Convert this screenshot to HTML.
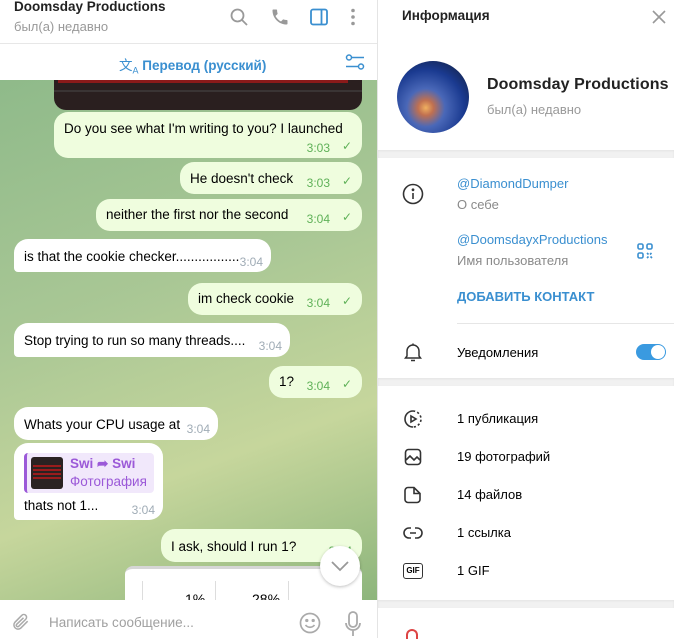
<!DOCTYPE html>
<html><head><meta charset="utf-8"><style>
*{margin:0;padding:0;box-sizing:border-box}
body{width:674px;height:638px;overflow:hidden;font-family:"Liberation Sans",sans-serif;font-size:13.5px;color:#000;position:relative;background:#fff}
.a{position:absolute;white-space:nowrap}
.bg{left:0;top:80px;width:377px;height:520px;background:linear-gradient(160deg,#8fba8a 0%,#a9c795 40%,#c6d69c 70%,#8db57c 100%)}
.b{position:absolute;border-radius:14px;padding:0 10px;white-space:nowrap}
.o{background:#effdde}
.i{background:#fff}
.t{position:absolute;font-size:12px}
.o .t{color:#5fb158}
.i .t{color:#a0acb6}
.ico{position:absolute}
.row{position:absolute;left:457px;font-size:13px;white-space:nowrap}
.gray{color:#8a8a8a}
.blue{color:#3a8fd0}
.band{position:absolute;left:378px;width:296px;height:8px;background:#f1f1f1;box-shadow:inset 0 1px 2px rgba(0,0,0,.06)}
</style></head><body>
<div class="a bg"></div>
<div class="b" style="left:54px;top:72px;width:308px;height:38px;background:#2a1f1f;border-radius:0 0 12px 12px"><div style="position:absolute;left:4px;top:8px;width:290px;height:3px;background:#8a1a1a"></div><div style="position:absolute;left:0;top:18px;width:308px;height:2px;background:#3a3434"></div></div>
<!-- header -->
<div class="a" style="left:0;top:0;width:377px;height:44px;background:#fff;border-bottom:1px solid #e7e7e7"></div>
<div class="a" style="left:14px;top:-1px;font-weight:bold;font-size:13.5px;color:#222">Doomsday Productions</div>
<div class="a" style="left:14px;top:19px;color:#999;font-size:13px">был(а) недавно</div>
<svg class="ico" style="left:229px;top:7px" width="20" height="20" viewBox="0 0 20 20" fill="none" stroke="#999" stroke-width="1.8"><circle cx="8.5" cy="8.5" r="6"/><path d="M13 13l5 5"/></svg>
<svg class="ico" style="left:270px;top:7px" width="20" height="20" viewBox="0 0 24 24" fill="#999"><path d="M6.6 10.8c1.4 2.8 3.8 5.1 6.6 6.6l2.2-2.2c.3-.3.7-.4 1-.2 1.1.4 2.3.6 3.6.6.6 0 1 .4 1 1V20c0 .6-.4 1-1 1C10.6 21 3 13.4 3 4c0-.6.4-1 1-1h3.5c.6 0 1 .4 1 1 0 1.3.2 2.5.6 3.6.1.3 0 .7-.2 1z"/></svg>
<svg class="ico" style="left:309px;top:7px" width="20" height="20" viewBox="0 0 20 20" fill="none" stroke="#3a8fd0" stroke-width="1.8"><rect x="2" y="2.5" width="16" height="15" rx="2"/><path d="M12.5 2.5v15"/></svg>
<svg class="ico" style="left:348px;top:7px" width="10" height="20" viewBox="0 0 10 20" fill="#999"><circle cx="5" cy="3.5" r="1.8"/><circle cx="5" cy="10" r="1.8"/><circle cx="5" cy="16.5" r="1.8"/></svg>
<!-- translate bar -->
<div class="a" style="left:0;top:45px;width:377px;height:35px;background:#fff"></div>
<div class="a" style="left:119px;top:54px;color:#3a8fd0;font-size:13.5px;font-weight:bold"><span style="font-weight:normal">文<sub style="font-size:9px">A</sub></span> Перевод (русский)</div>
<svg class="ico" style="left:345px;top:54px" width="20" height="16" viewBox="0 0 20 16" fill="none" stroke="#3a8fd0" stroke-width="1.5"><circle cx="4" cy="3.5" r="2.5"/><path d="M7 3.5h12M1 12.5h12"/><circle cx="16" cy="12.5" r="2.5"/></svg>

<div class="b o" style="left:54px;top:112px;width:308px;height:46px"><div style="position:absolute;left:10px;top:9px">Do you see what I'm writing to you? I launched</div><div class="t" style="right:32px;top:29px">3:03</div><div class="t" style="right:10px;top:27px">✓</div></div>
<div class="b o" style="left:180px;top:162px;width:182px;height:32px"><div style="position:absolute;left:10px;top:9px">He doesn't check</div><div class="t" style="right:32px;top:14px">3:03</div><div class="t" style="right:10px;top:12px">✓</div></div>
<div class="b o" style="left:96px;top:199px;width:266px;height:32px"><div style="position:absolute;left:10px;top:8px">neither the first nor the second</div><div class="t" style="right:32px;top:13px">3:04</div><div class="t" style="right:10px;top:11px">✓</div></div>
<div class="b i" style="left:14px;top:239px;width:257px;height:33px;border-bottom-left-radius:4px"><div style="position:absolute;left:10px;top:10px">is that the cookie checker.................</div><div class="t" style="right:8px;top:16px">3:04</div></div>
<div class="b o" style="left:188px;top:283px;width:174px;height:32px"><div style="position:absolute;left:10px;top:8px">im check cookie</div><div class="t" style="right:32px;top:13px">3:04</div><div class="t" style="right:10px;top:11px">✓</div></div>
<div class="b i" style="left:14px;top:323px;width:276px;height:34px;border-bottom-left-radius:4px"><div style="position:absolute;left:10px;top:10px">Stop trying to run so many threads....</div><div class="t" style="right:8px;top:16px">3:04</div></div>
<div class="b o" style="left:269px;top:366px;width:93px;height:32px"><div style="position:absolute;left:10px;top:8px">1?</div><div class="t" style="right:32px;top:13px">3:04</div><div class="t" style="right:10px;top:11px">✓</div></div>
<div class="b i" style="left:14px;top:407px;width:204px;height:33px"><div style="position:absolute;left:10px;top:10px">Whats your CPU usage at</div><div class="t" style="right:8px;top:15px">3:04</div></div>
<div class="b i" style="left:14px;top:443px;width:149px;height:77px;border-bottom-left-radius:4px">
 <div style="position:absolute;left:10px;top:10px;width:130px;height:40px;background:#f1e8fb;border-left:3px solid #9b59d8;border-radius:4px"></div>
 <div style="position:absolute;left:17px;top:14px;width:32px;height:32px;background:#2a2222;border-radius:3px"><div style="margin:8px 2px;height:14px;background:repeating-linear-gradient(#9a1c1c 0 2px,#2a2222 2px 4px)"></div></div>
 <div style="position:absolute;left:56px;top:13px;color:#9b59d8;font-weight:bold">Swi ➦ Swi</div>
 <div style="position:absolute;left:56px;top:31px;color:#9b59d8">Фотография</div>
 <div style="position:absolute;left:10px;top:55px">thats not 1...</div><div class="t" style="right:8px;top:60px">3:04</div></div>
<div class="b o" style="left:161px;top:529px;width:201px;height:33px"><div style="position:absolute;left:10px;top:10px">I ask, should I run 1?</div><div class="t" style="right:10px;top:15px">3:04</div></div>
<div class="a" style="left:125px;top:566px;width:237px;height:34px;background:#fff;border-top:3px solid #d6d6d6;border-radius:8px 8px 0 0"><div style="position:absolute;left:60px;top:22px;font-size:14px">1%</div><div style="position:absolute;left:127px;top:22px;font-size:14px">28%</div><div style="position:absolute;left:17px;top:12px;width:1px;height:22px;background:#ddd"></div><div style="position:absolute;left:90px;top:12px;width:1px;height:22px;background:#ddd"></div><div style="position:absolute;left:163px;top:12px;width:1px;height:22px;background:#ddd"></div></div>
<div class="a" style="left:320px;top:546px;width:40px;height:40px;border-radius:50%;background:#fff;box-shadow:0 1px 3px rgba(0,0,0,.25)"><svg style="position:absolute;left:10px;top:14px" width="20" height="12" viewBox="0 0 20 12" fill="none" stroke="#999" stroke-width="1.8"><path d="M2 2l8 8 8-8"/></svg></div>
<!-- input -->
<div class="a" style="left:0;top:600px;width:377px;height:38px;background:#fff"></div>
<svg class="ico" style="left:11px;top:612px" width="20" height="20" viewBox="0 0 24 24" fill="none" stroke="#aaa" stroke-width="1.8"><path d="M20 11l-8.5 8.5a5 5 0 01-7-7L13 4a3.3 3.3 0 014.7 4.7l-8.5 8.5a1.7 1.7 0 01-2.4-2.4L15 7"/></svg>
<div class="a" style="left:49px;top:615px;color:#a0a0a0">Написать сообщение...</div>
<svg class="ico" style="left:299px;top:612px" width="22" height="22" viewBox="0 0 22 22" fill="none" stroke="#aaa" stroke-width="1.7"><circle cx="11" cy="11" r="9.5"/><circle cx="7.8" cy="8.5" r=".8" fill="#aaa"/><circle cx="14.2" cy="8.5" r=".8" fill="#aaa"/><path d="M6.5 13c2.5 3 6.5 3 9 0"/></svg>
<svg class="ico" style="left:344px;top:611px" width="18" height="26" viewBox="0 0 18 26" fill="none" stroke="#aaa" stroke-width="1.8"><rect x="5" y="1" width="8" height="15" rx="4"/><path d="M2 12a7 7 0 0014 0M9 19v6"/></svg>
<div class="a" style="left:377px;top:0;width:1px;height:638px;background:#e4e4e4"></div>
<!-- right pane -->
<div class="a" style="left:402px;top:8px;font-weight:bold;font-size:13.5px;color:#222">Информация</div>
<svg class="ico" style="left:652px;top:10px" width="14" height="14" viewBox="0 0 14 14" stroke="#999" stroke-width="1.6"><path d="M1 1l12 12M13 1L1 13"/></svg>
<div class="a" style="left:397px;top:61px;width:72px;height:72px;border-radius:50%;background:radial-gradient(circle at 40% 65%,#f0b060 0%,#c07050 12%,#4a68b8 30%,#1a3a90 60%,#101828 100%)"></div>
<div class="a" style="left:487px;top:76px;font-weight:bold;font-size:16px;color:#222;letter-spacing:.1px">Doomsday Productions</div>
<div class="a" style="left:487px;top:102px;color:#999;font-size:13px">был(а) недавно</div>
<div class="band" style="top:150px"></div>
<svg class="ico" style="left:402px;top:183px" width="22" height="22" viewBox="0 0 22 22" fill="none" stroke="#333" stroke-width="1.6"><circle cx="11" cy="11" r="9.5"/><path d="M11 10v6"/><circle cx="11" cy="6.8" r=".6" fill="#333"/></svg>
<div class="row blue" style="top:176px">@DiamondDumper</div>
<div class="row gray" style="top:197px">О себе</div>
<div class="row blue" style="top:232px">@DoomsdayxProductions</div>
<div class="row gray" style="top:253px">Имя пользователя</div>
<svg class="ico" style="left:637px;top:243px" width="16" height="16" viewBox="0 0 16 16" fill="none" stroke="#3a8fd0" stroke-width="1.6"><rect x="1" y="1" width="5" height="5" rx="1.5"/><rect x="10" y="1" width="5" height="5" rx="1.5"/><rect x="1" y="10" width="5" height="5" rx="1.5"/><path d="M10 10l1.5 1.5M14.5 10l-1.5 1.5M10 15l1.5-1.5M15 15l-1.5-1.5"/></svg>
<div class="row blue" style="top:289px;font-weight:bold">ДОБАВИТЬ КОНТАКТ</div>
<div class="a" style="left:457px;top:323px;width:217px;height:1px;background:#e6e6e6"></div>
<svg class="ico" style="left:404px;top:342px" width="18" height="20" viewBox="0 0 18 20" fill="none" stroke="#333" stroke-width="1.5"><path d="M3 14V9a6 6 0 0112 0v5l1.5 2h-15zM7 18.5h4M9 1.5v1.5"/></svg>
<div class="row" style="top:345px">Уведомления</div>
<div class="a" style="left:636px;top:344px;width:30px;height:16px;border-radius:8px;background:#3a9ae0"></div>
<div class="a" style="left:651px;top:345px;width:14px;height:14px;border-radius:50%;background:#fff"></div>
<div class="band" style="top:378px"></div>
<svg class="ico" style="left:403px;top:409px" width="20" height="20" viewBox="0 0 20 20" fill="none" stroke="#333" stroke-width="1.6"><path d="M10 2a8 8 0 100 16"/><path d="M10 2a8 8 0 010 16" stroke-dasharray="2.2 2.2"/><path d="M8 7v6l5-3z"/></svg>
<div class="row" style="top:411px">1 публикация</div>
<svg class="ico" style="left:404px;top:448px" width="18" height="18" viewBox="0 0 18 18" fill="none" stroke="#333" stroke-width="1.6"><rect x="1.5" y="1.5" width="15" height="15" rx="3"/><path d="M2 12l4-4 4 4 3-3 3 3"/></svg>
<div class="row" style="top:449px">19 фотографий</div>
<svg class="ico" style="left:404px;top:486px" width="18" height="18" viewBox="0 0 18 18" fill="none" stroke="#333" stroke-width="1.6"><path d="M4 1.5h6l6 6v6a3 3 0 01-3 3H4a3 3 0 01-3-3v-9a3 3 0 013-3zM10 1.5v6h6"/></svg>
<div class="row" style="top:487px">14 файлов</div>
<svg class="ico" style="left:403px;top:525px" width="20" height="16" viewBox="0 0 20 16" fill="none" stroke="#333" stroke-width="1.6"><path d="M8 3H6a5 5 0 000 10h2M12 3h2a5 5 0 010 10h-2M7 8h6"/></svg>
<div class="row" style="top:525px">1 ссылка</div>
<div class="a" style="left:403px;top:563px;width:20px;height:16px;border:1.5px solid #333;border-radius:3px;font-size:8px;font-weight:bold;text-align:center;line-height:13px">GIF</div>
<div class="row" style="top:563px">1 GIF</div>
<div class="band" style="top:600px"></div>
<div class="a" style="left:406px;top:629px;width:12px;height:10px;border-radius:6px 6px 0 0;border:2px solid #d44;border-bottom:none"></div>
</body></html>
